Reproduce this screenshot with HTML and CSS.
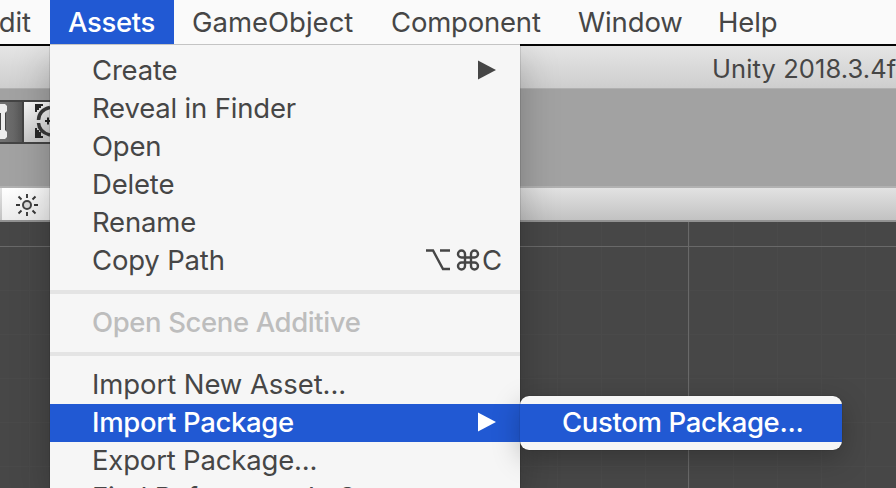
FILE: index.html
```html
<!DOCTYPE html>
<html lang="en">
<head>
<meta charset="utf-8">
<title>Unity</title>
<link rel="stylesheet" href="styles.css">
</head>
<body>
<nav class="menubar">
  <span class="top edit">Edit</span>
  <span class="top assets">Assets</span>
  <span class="top gameobject">GameObject</span>
  <span class="top component">Component</span>
  <span class="top window">Window</span>
  <span class="top help">Help</span>
</nav>
<main class="app">
  <header class="titlebar"><span>Unity 2018.3.4f1</span></header>
  <div class="toolbar">
    <div class="tools">
      <div class="tool rect-tool">
        <svg width="22" height="40" viewBox="0 0 22 40"><path d="M3 8v22" stroke="#eee" stroke-width="4"/><path d="M.5 9v20M5.500 9v20" stroke="#444" stroke-width="1"/><path d="M0 2h5l2 2v5l-2 2H0zM0 28h5l2 2v5l-2 2H0z" fill="#ededed"/></svg>
      </div>
      <div class="tool transform-tool">
        <svg width="26" height="40" viewBox="0 0 26 40"><path d="M11 2h8v2h-2v2h-2v2h-2v2h-2zM11 36V26h2v2h2v2h2v4h2v2z" fill="#282828" shape-rendering="crispEdges"/><path d="M26 5.500Q15 8 14.500 18M14.500 21Q15 30 26 33" fill="none" stroke="#383838" stroke-width="3.500"/><path d="M21 19h5M24 15.500v7" stroke="#222" stroke-width="2"/></svg>
      </div>
    </div>
  </div>
  <div class="scenebar">
    <div class="light">
      <svg width="22" height="22" viewBox="0 0 22 22"><circle cx="11" cy="11" r="4" fill="#ddd" stroke="#444" stroke-width="2"/><path d="M11 0v4M11 18v4M0 11h4M18 11h4M2.500 2.500l3 3M16.500 16.500l3 3M2.500 19.500l3-3M16.500 5.500l3-3" stroke="#383838" stroke-width="1.900"/></svg>
    </div>
  </div>
  <div class="scene"></div>
</main>
<div class="menu">
  <div class="item"><span>Create</span><svg class="arrow" width="18" height="20" viewBox="0 0 18 20"><path d="M0 0.500 18 10 0 19.500z" fill="currentColor"/></svg></div>
  <div class="item"><span>Reveal in Finder</span></div>
  <div class="item"><span>Open</span></div>
  <div class="item"><span>Delete</span></div>
  <div class="item"><span>Rename</span></div>
  <div class="item"><span>Copy Path</span><span class="shortcut"><svg width="54" height="24" viewBox="0 0 54 24"><g fill="none" stroke="currentColor" stroke-width="2.400"><path d="M0 2.500h7l10 18.500h7M14 2.500h10"/><path d="M39 9v9a3.500 3.500 0 1 1-3.500-3.500h13a3.500 3.500 0 1 1-3.500 3.500V6a3.500 3.500 0 1 1 3.500 3.500h-13A3.500 3.500 0 1 1 39 6z"/></g></svg><span>C</span></span></div>
  <div class="sep"></div>
  <div class="item disabled"><span>Open Scene Additive</span></div>
  <div class="sep"></div>
  <div class="item new-asset"><span>Import New Asset...</span></div>
  <div class="item selected"><span>Import Package</span><svg class="arrow" width="18" height="20" viewBox="0 0 18 20"><path d="M0 0.500 18 10 0 19.500z" fill="currentColor"/></svg></div>
  <div class="item"><span>Export Package...</span></div>
  <div class="item last"><span>Find References In Scene</span></div>
</div>
<div class="submenu">
  <div class="item selected"><span>Custom Package...</span></div>
</div>
</body>
</html>
```

FILE: styles.css
```css
* { box-sizing: border-box; }
body {
  margin: 0;
  width: 896px;
  height: 488px;
  overflow: hidden;
  position: relative;
  background: #474747;
  color: #464646;
  font: 400 27.5px/38px Inter, "Liberation Sans", sans-serif;
  white-space: nowrap;
}
svg { display: block; flex: none; }
.menubar { display: flex; height: 44px; background: #fafafa; letter-spacing: -.1px; }
.top { flex: none; line-height: 44px; }
.edit { width: 50px; display: flex; justify-content: flex-end; padding-right: 19px; }
.assets { width: 124px; padding-left: 18px; background: #2159d3; color: #fff; font-weight: 500; letter-spacing: -.35px; }
.gameobject { width: 199px; padding-left: 18px; letter-spacing: 0; }
.component { width: 188px; padding-left: 18px; letter-spacing: -.2px; }
.window { width: 140px; padding-left: 17px; }
.help { padding-left: 17px; }

.app { display: flex; flex-direction: column; height: 444px; border-top: 2px solid #050505; }
.titlebar {
  height: 43px;
  flex: none;
  padding-left: 712px;
  overflow: hidden;
  border-bottom: 1px solid #b0b0b0;
  background: linear-gradient(#e5e5e5, #cecece);
  font-size: 25.5px;
  line-height: 46px;
  letter-spacing: .1px;
}
.toolbar { height: 99px; flex: none; padding-top: 11px; background: #a2a2a2; border-bottom: 2px solid #b1b1b1; }
.tools { display: flex; width: 50px; height: 44px; border: solid #444; border-width: 2px 0; }
.tool { height: 40px; }
.rect-tool { width: 24px; background: linear-gradient(90deg, #727272, #686868 60%, #575757); border-right: 2px solid #444; }
.transform-tool { width: 26px; background: linear-gradient(#f8f8f8, #c9c9c9); overflow: hidden; }
.scenebar { height: 34px; flex: none; padding-left: 2px; background: linear-gradient(#e2e2e2, #c2c2c2); border-bottom: 2px solid #929292; }
.light { width: 48px; height: 32px; padding: 6px 0 0 14px; background: linear-gradient(#fff, #ececec); }
.scene {
  flex: 1;
  background:
    linear-gradient(#696969, #696969) 688px 0 / 1px 100% no-repeat,
    linear-gradient(#696969, #696969) 0 24px / 100% 1px no-repeat,
    repeating-linear-gradient(90deg, transparent 0 29px, #4a4a4a 29px 30px, transparent 30px 44px),
    repeating-linear-gradient(transparent 0 24px, #4a4a4a 24px 25px, transparent 25px 44px),
    #474747;
}

.menu {
  position: absolute;
  left: 50px;
  top: 44px;
  width: 470px;
  height: 444px;
  overflow: hidden;
  padding-top: 7px;
  border-top: 1px solid #c4c4c4;
  background: #f6f6f6;
  box-shadow: 0 0 1px rgba(0,0,0,.6), 0 14px 36px rgba(0,0,0,.25);
  clip-path: inset(0 -80px -80px -80px);
}
.item { display: flex; flex: none; align-items: center; height: 38px; padding: 0 24px 0 42px; letter-spacing: -.18px; }
.item > span { padding-bottom: 2px; }
.item.last > span { padding-bottom: 4px; }
.new-asset { letter-spacing: -.08px; }
.arrow { margin-left: auto; margin-bottom: 2px; }
.sep { height: 24px; padding: 10px 0; }
.sep::before { content: ""; display: block; height: 4px; background: #e4e4e4; }
.disabled { color: #bdbdbd; font-weight: 500; letter-spacing: -.39px; }
.selected { background: #2159d3; color: #fff; letter-spacing: -.34px; }
.selected span { font-weight: 500; }
.item > .shortcut { display: flex; align-items: center; margin-left: auto; margin-right: -6px; gap: 2px; }

.submenu {
  position: absolute;
  left: 520px;
  top: 396px;
  width: 322px;
  height: 54px;
  padding: 8px 0;
  border-radius: 9px;
  background: #f6f6f6;
  box-shadow: 0 0 1px rgba(0,0,0,.6), 0 8px 28px rgba(0,0,0,.25);
}
```
